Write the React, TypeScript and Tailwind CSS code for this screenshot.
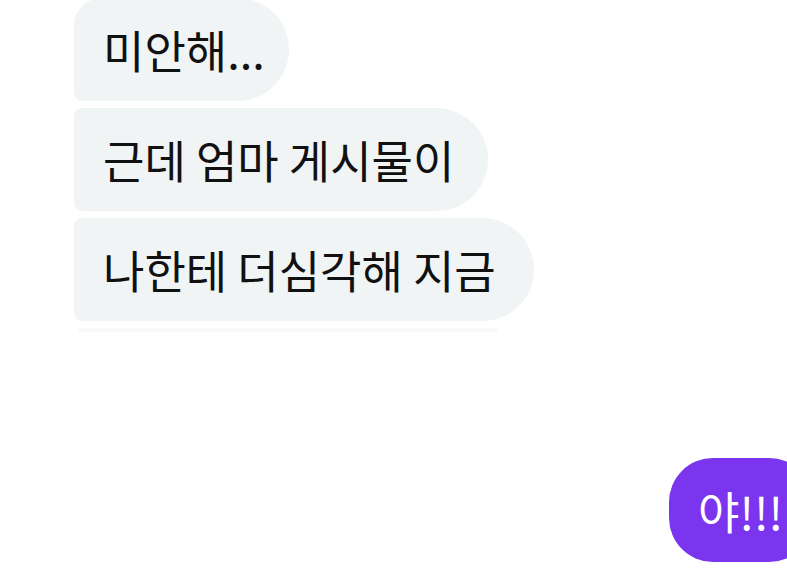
import React from "react";

const font = { fontFamily: '"Noto Sans CJK KR", "Noto Sans", sans-serif' };

const Bubble: React.FC<{ text: string; corner: string; pad: string }> = ({ text, corner, pad }) => (
  <div
    className={`flex h-[103px] w-fit items-center bg-[#f1f4f5] pl-[29px] text-[45px] font-normal leading-none text-[#111] rounded-r-[52px] ${corner} ${pad}`}
  >
    {text}
  </div>
);

export default function App() {
  return (
    <div className="relative h-[585px] w-[787px] overflow-hidden bg-white" style={font}>
      <div className="flex flex-col gap-[7px] pl-[74px] -mt-[2px]">
        <Bubble text="미안해..." corner="rounded-tl-[28px] rounded-bl-[8px]" pad="pr-[24px]" />
        <Bubble text="근데 엄마 게시물이" corner="rounded-l-[8px]" pad="pr-[34px]" />
        <Bubble text="나한테 더심각해 지금" corner="rounded-l-[8px]" pad="pr-[38px]" />
        <div className="ml-[4px] h-[4px] w-[420px] rounded-full bg-[#f7f9fa]" />
      </div>
      <div className="mt-[126px] flex justify-end -mr-[26px]">
        <div className="flex h-[104px] items-center rounded-[44px] bg-[#7b35ef] pl-[29px] pr-[30px] text-[45px] font-normal leading-none text-white">
          야!!!
        </div>
      </div>
    </div>
  );
}
